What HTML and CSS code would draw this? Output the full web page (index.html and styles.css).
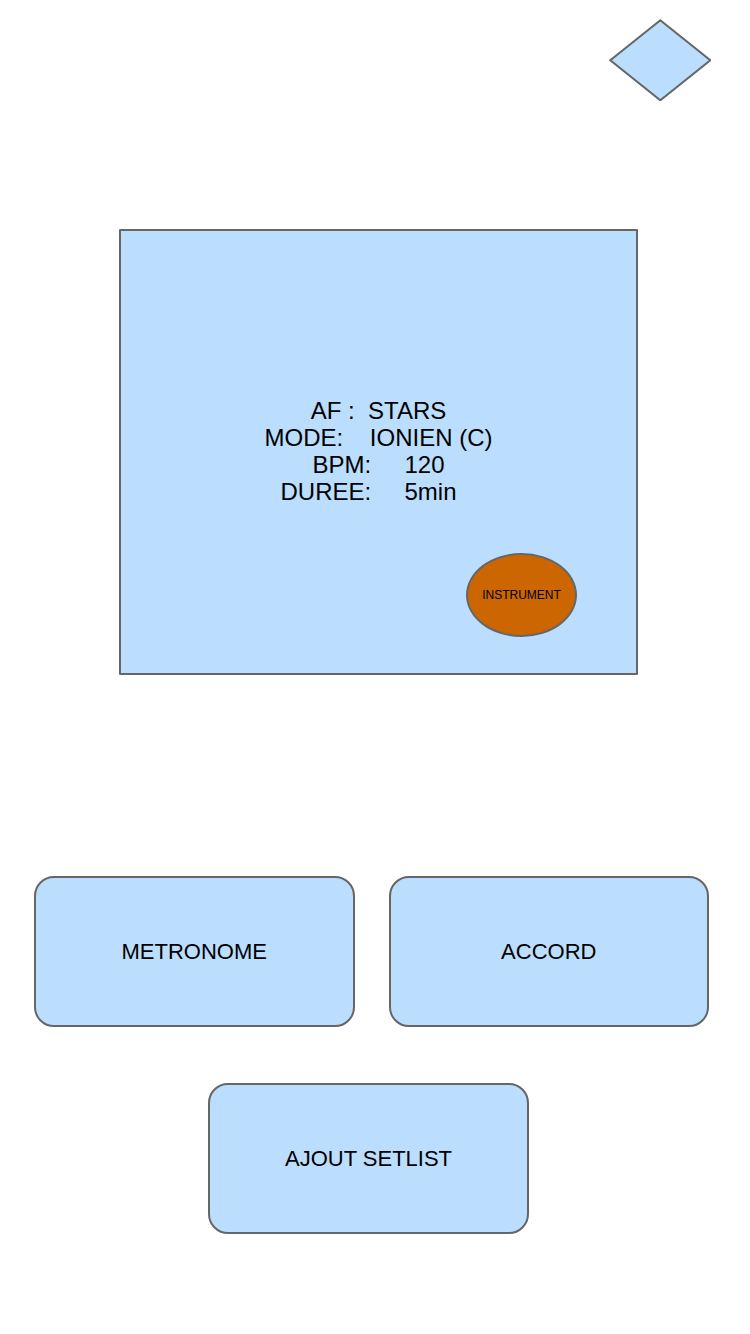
FILE: index.html
```html
<!DOCTYPE html>
<html lang="fr">
<head>
<meta charset="utf-8">
<meta name="viewport" content="width=device-width, initial-scale=1">
<title>Stars</title>
<link rel="stylesheet" href="styles.css">
</head>
<body>
<div class="screen">
  <header class="top">
    <button class="diamond" type="button" aria-label="Menu">
      <svg viewBox="0 0 102 82" width="102" height="82" aria-hidden="true"><path d="M51.3 1.3 101.3 41.3 51.3 81.3 1.3 41.3Z" fill="#bbdeff" stroke="#666" stroke-width="2"/></svg>
    </button>
  </header>
  <main class="card">
    <div class="details">
      <p class="line">AF :  STARS</p>
      <p class="line">MODE:    IONIEN (C)</p>
      <p class="line">BPM:     120</p>
      <p class="line">DUREE:     5min   </p>
    </div>
    <button class="instrument" type="button">INSTRUMENT</button>
  </main>
  <nav class="actions">
    <div class="row">
      <button class="action" type="button">METRONOME</button>
      <button class="action" type="button">ACCORD</button>
    </div>
    <button class="action single" type="button">AJOUT SETLIST</button>
  </nav>
</div>
</body>
</html>
```
FILE: styles.css
```css
* {
  box-sizing: border-box;
}

body {
  margin: 0;
  background: #fff;
  color: #000;
  font-family: "Liberation Sans", Arial, sans-serif;
}

button {
  margin: 0;
  padding: 0;
  color: inherit;
  font-family: inherit;
  cursor: pointer;
}

.screen {
  display: flex;
  flex-direction: column;
  padding: 19px 41px 100px 34px;
}

.top {
  display: flex;
  justify-content: flex-end;
}

.diamond {
  display: block;
  margin-right: -2px;
  border: 0;
  background: none;
}

.diamond svg {
  display: block;
}

.card {
  position: relative;
  min-height: 446px;
  margin: 128px 71px 0 85px;
  padding: 8px 8px 10px;
  display: flex;
  align-items: center;
  justify-content: center;
  border: 2px solid #666;
  border-radius: 1px;
  background: #bbdeff;
}

.details {
  font-size: 24px;
  line-height: 27px;
  text-align: center;
}

.line {
  margin: 0;
  white-space: pre;
}

.instrument {
  position: absolute;
  right: 59px;
  bottom: 36px;
  width: 111px;
  height: 84px;
  border: 2px solid #666;
  border-radius: 50%;
  background: #cc6600;
  font-size: 12px;
}

.actions {
  display: flex;
  flex-direction: column;
  gap: 56px;
  margin-top: 201px;
}

.row {
  display: flex;
  gap: 34px;
}

.action {
  flex: 1;
  min-height: 151px;
  border: 2px solid #666;
  border-radius: 20px;
  background: #bbdeff;
  font-size: 22px;
}

.single {
  flex: none;
  align-self: center;
  width: 321px;
  margin-right: 6px;
}
```
